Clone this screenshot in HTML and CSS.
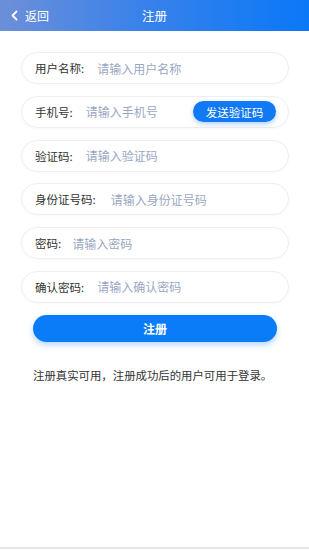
FILE: index.html
```html
<!DOCTYPE html>
<html lang="zh">
<head>
<meta charset="utf-8">
<link rel="stylesheet" href="styles.css">
</head>
<body>
<div class="page">
  <header class="topbar">
    <div class="back">
      <svg class="chev" width="9" height="11" viewBox="0 0 9 11"><path d="M6.5 1.5 L2.5 5.5 L6.5 9.5" fill="none" stroke="#fff" stroke-width="1.8" stroke-linecap="round" stroke-linejoin="round"/></svg>
      <span>返回</span>
    </div>
    <div class="title">注册</div>
  </header>
  <main class="form">
    <div class="field"><span class="label">用户名称:</span><span class="ph">请输入用户名称</span></div>
    <div class="field"><span class="label">手机号:</span><span class="ph">请输入手机号</span><span class="send">发送验证码</span></div>
    <div class="field"><span class="label">验证码:</span><span class="ph">请输入验证码</span></div>
    <div class="field"><span class="label">身份证号码:</span><span class="ph ph-wide">请输入身份证号码</span></div>
    <div class="field"><span class="label">密码:</span><span class="ph ph-tight">请输入密码</span></div>
    <div class="field"><span class="label">确认密码:</span><span class="ph">请输入确认密码</span></div>
    <button class="submit">注册</button>
    <p class="note">注册真实可用，注册成功后的用户可用于登录。</p>
  </main>
  <div class="spacer"></div>
  <div class="bottom-line"></div>
</div>
</body>
</html>
```
FILE: styles.css
```css
* { box-sizing: border-box; }
html, body { margin: 0; padding: 0; }
body {
  font-family: "Noto Sans CJK SC", "Noto Sans", sans-serif;
  background: #fff;
  color: #333;
}
.page {
  height: 550px;
  display: flex;
  flex-direction: column;
}
.topbar {
  height: 31px;
  background: linear-gradient(90deg, #6d8fd8 0%, #3a82ea 45%, #0a78f7 100%);
  display: flex;
  align-items: center;
  position: relative;
  color: #fff;
  flex: none;
}
.back {
  display: flex;
  align-items: center;
  padding-left: 10px;
  font-size: 12px;
  gap: 6px;
}
.chev { display: block; }
.title {
  position: absolute;
  left: 0;
  right: 0;
  text-align: center;
  font-size: 12.5px;
  pointer-events: none;
}
.form {
  padding: 21px 20px 0 21px;
  display: flex;
  flex-direction: column;
  gap: 11.8px;
}
.field {
  height: 32px;
  border: 1px solid #eeeeee;
  border-radius: 17px;
  box-shadow: 0 1px 3px rgba(0,0,0,0.03);
  display: flex;
  align-items: center;
  padding: 0 12px 0 13px;
  font-size: 11.5px;
}
.label { color: #333; }
.ph {
  color: #9aa7c2;
  margin-left: 13px;
  font-size: 12px;
}
.ph-wide { margin-left: 15px; }
.ph-tight { margin-left: 11px; }
.send {
  margin-left: auto;
  width: 83px;
  height: 21px;
  border-radius: 11px;
  background: #1179f3;
  color: #fff;
  font-size: 11.5px;
  display: flex;
  align-items: center;
  justify-content: center;
  box-shadow: 0 2px 5px rgba(17,121,243,0.35);
}
.submit {
  margin: 0 12px 0 12px;
  height: 27px;
  border: none;
  border-radius: 14px;
  background: #0a7cf7;
  color: #fff;
  font-family: inherit;
  font-size: 12px;
  font-weight: bold;
  box-shadow: 0 3px 6px rgba(10,124,247,0.3);
  padding: 0;
}
.note {
  margin: 13px 0 0 12px;
  font-size: 11.4px;
  color: #333;
}
.spacer { flex: 1; }
.bottom-line {
  height: 2px;
  background: #e6e6e6;
  margin-bottom: 1px;
  flex: none;
}
```
